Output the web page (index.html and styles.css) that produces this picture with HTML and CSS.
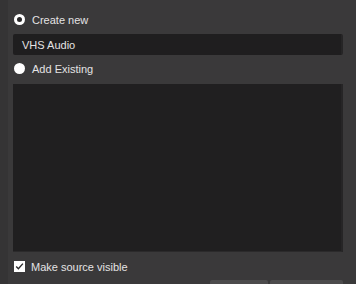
FILE: index.html
```html
<!DOCTYPE html>
<html lang="en">
<head>
  <meta charset="UTF-8">
  <title>Add Source</title>
  <link rel="stylesheet" href="styles.css">
</head>
<body>
  <div class="dialog">
    <label class="option">
      <span class="radio checked"></span>
      <span>Create new</span>
    </label>
    <div class="name-input">VHS Audio</div>
    <label class="option">
      <span class="radio"></span>
      <span>Add Existing</span>
    </label>
    <div class="source-list"></div>
    <label class="option visible-row">
      <span class="checkbox">
        <svg width="11" height="11" viewBox="0 0 11 11">
          <path d="M2.2 5.6 L4.4 7.8 L8.9 2.6" fill="none" stroke="#2a292a" stroke-width="1.4"/>
        </svg>
      </span>
      <span>Make source visible</span>
    </label>
    <div class="buttons">
      <button class="btn ok" aria-label="OK"></button>
      <button class="btn cancel" aria-label="Cancel"></button>
    </div>
  </div>
</body>
</html>
```

FILE: styles.css
```css
* {
  box-sizing: border-box;
}

body {
  margin: 0;
  background: #3a393a;
  color: #e4e3e4;
  font-family: "Liberation Sans", Arial, sans-serif;
  font-size: 11px;
  overflow: hidden;
}

.dialog {
  display: flex;
  flex-direction: column;
  padding: 10px 13px 0 5px;
  height: 284px;
  border-left: 8px solid #353435;
}

.dialog > * {
  flex-shrink: 0;
}

.option {
  display: flex;
  align-items: center;
  gap: 7px;
  height: 19px;
  padding-left: 1px;
}

.radio {
  width: 11px;
  height: 11px;
  border-radius: 50%;
  background: #ffffff;
  display: flex;
  align-items: center;
  justify-content: center;
}

.radio.checked::after {
  content: "";
  width: 5px;
  height: 5px;
  border-radius: 50%;
  background: #2a292a;
}

.name-input {
  margin-top: 5px;
  margin-bottom: 4px;
  height: 21px;
  background: #1f1e1f;
  border-right: 2px solid #262526;
  border-radius: 2px;
  padding-left: 9px;
  display: flex;
  align-items: center;
}

.source-list {
  margin-top: 6px;
  height: 168px;
  background: #201f20;
  border-right: 2px solid #262526;
  border-bottom: 1px solid #2b2a2b;
}

.visible-row {
  margin-top: 5px;
  gap: 6px;
}

.checkbox {
  width: 11px;
  height: 11px;
  background: #ffffff;
  display: flex;
}

.buttons {
  display: flex;
  justify-content: flex-end;
  gap: 2px;
  margin-top: 4px;
}

.btn {
  height: 24px;
  border: none;
  border-radius: 2px;
  background: #4c4b4c;
}

.ok {
  width: 58px;
}

.cancel {
  width: 73px;
}
```
